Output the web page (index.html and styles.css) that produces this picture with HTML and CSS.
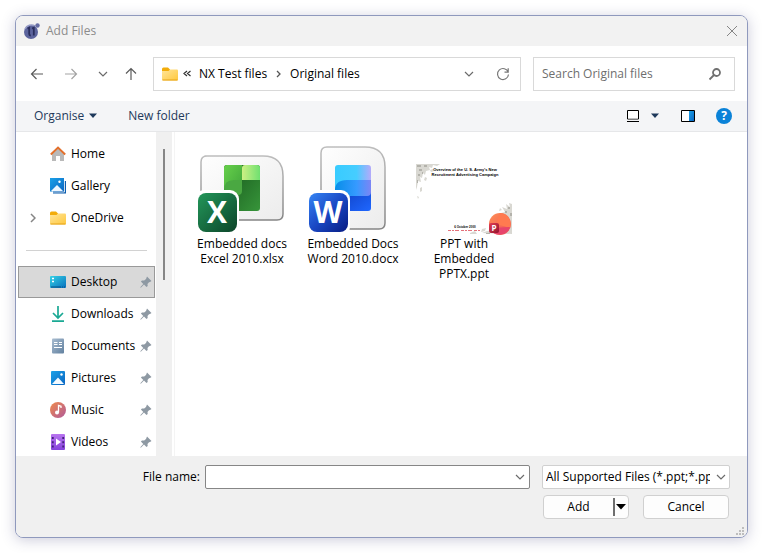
FILE: index.html
```html
<!DOCTYPE html>
<html lang="en">
  <head>
    <meta charset="utf-8">
    <title>Add Files</title>
    <link rel="stylesheet" href="styles.css">
  </head>

  <body>
    <!-- Shapes used more than once -->
    <svg class="defs" width="0" height="0" aria-hidden="true">
      <defs>
        <linearGradient id="folderFill" x1="0" y1="0" x2="1" y2="1">
          <stop offset="0" stop-color="#ffe59a"/><stop offset="1" stop-color="#ffc83d"/>
        </linearGradient>
        <linearGradient id="blueFill" x1="0" y1="0" x2="1" y2="1">
          <stop offset="0" stop-color="#1ba1e8"/><stop offset="1" stop-color="#0a66c2"/>
        </linearGradient>
        <linearGradient id="paperFill" x1="0" y1="0" x2="1" y2="1">
          <stop offset="0" stop-color="#fefefe"/><stop offset="1" stop-color="#ececec"/>
        </linearGradient>
        <linearGradient id="paperEdge" x1="0" y1="0" x2="0" y2="1">
          <stop offset="0" stop-color="#bdbdbd"/><stop offset="1" stop-color="#858585"/>
        </linearGradient>
        <symbol id="folder" viewBox="0 0 16 14">
          <rect y="2.500" width="16" height="11" rx="1" fill="url(#folderFill)"/>
          <path d="M0 2a1.500 1.500 0 0 1 1.500-1.500H6l2 2-1.500 1.500H0z" fill="#f2ac0a"/>
          <path d="M.5 13h15" stroke="#e5a31b"/>
        </symbol>
        <symbol id="pin" viewBox="0 0 12 12">
          <path d="M7 .5 11.500 5 10 6l-1 .2L7.500 8l.2 2L6.500 11 4 8.500.8 11.700.3 11.200 3.300 8 .9 5.500 2 4.500l2.200.1L6 3z" fill="#8e99a3"/>
        </symbol>
        <symbol id="chevron" viewBox="0 0 10 10">
          <path d="M1 3l4 4 4-4" fill="none" stroke="#6b6b6b" stroke-width="1.200"/>
        </symbol>
        <symbol id="caret" viewBox="0 0 10 6">
          <path d="M1 0.500h8L5 5z" fill="currentColor"/>
        </symbol>
      </defs>
    </svg>

    <div class="window">
      <header class="titlebar">
        <svg class="app-icon" viewBox="0 0 16 16">
          <circle cx="7" cy="9" r="7" fill="#5c649d"/>
          <path d="M1 6a7 7 0 0 1 10-3" fill="none" stroke="#949ac4" stroke-width="1.500"/>
          <circle cx="13.500" cy="2.500" r="2.200" fill="#666da4"/>
          <path d="M3.500 5.500l1.700-.8v6.300q0 1.500 1.600 1.500M8 5.500l1.800-.8V12.500" fill="none" stroke="#292e5d" stroke-width="1.800"/>
        </svg>
        <h1 class="title">Add Files</h1>
        <button class="plain close" aria-label="Close">
          <svg viewBox="0 0 12 12"><path d="M1 1l10 10M11 1L1 11" stroke="#858585" fill="none"/></svg>
        </button>
      </header>

      <nav class="navbar">
        <div class="nav-buttons">
          <button class="plain" aria-label="Back">
            <svg viewBox="0 0 14 14"><path d="M13 7H1.500M6.500 2L1.500 7l5 5" stroke="#5b5b5b" stroke-width="1.200" fill="none"/></svg>
          </button>
          <button class="plain" aria-label="Forward">
            <svg viewBox="0 0 14 14"><path d="M1 7h11.500M7.500 2l5 5-5 5" stroke="#a3a3a3" stroke-width="1.200" fill="none"/></svg>
          </button>
          <button class="plain recent" aria-label="Recent locations">
            <svg class="small"><use href="#chevron"/></svg>
          </button>
          <button class="plain" aria-label="Up">
            <svg viewBox="0 0 14 14"><path d="M7 13V1.500M2 6.500l5-5 5 5" stroke="#5b5b5b" stroke-width="1.200" fill="none"/></svg>
          </button>
        </div>
        <div class="address">
          <svg class="icon"><use href="#folder"/></svg>
          <svg class="overflow" viewBox="0 0 8 8"><path d="M4 1L1 3.500 4 6M7.500 1l-3 2.500 3 2.500" stroke="#333" stroke-width="1.200" fill="none"/></svg>
          <a href="#">NX Test files</a>
          <svg class="sep" viewBox="0 0 6 8"><path d="M1 1l3 3-3 3" stroke="#555" stroke-width="1.300" fill="none"/></svg>
          <a href="#">Original files</a>
          <button class="plain history" aria-label="Previous locations">
            <svg class="small"><use href="#chevron"/></svg>
          </button>
          <button class="plain" aria-label="Refresh">
            <svg viewBox="0 0 14 14"><path d="M12.200 5.200A5.500 5.500 0 1 0 12.500 7.500M12.200 1.200v4H8.500" stroke="#777" stroke-width="1.200" fill="none"/></svg>
          </button>
        </div>
        <div class="search">
          <input type="text" placeholder="Search Original files" aria-label="Search Original files">
          <button class="plain" aria-label="Search">
            <svg viewBox="0 0 14 14"><circle cx="8.500" cy="5.500" r="3.500" stroke="#707070" stroke-width="1.800" fill="none"/><path d="M6 8l-4.500 4.500" stroke="#707070" stroke-width="1.800"/></svg>
          </button>
        </div>
      </nav>

      <div class="toolbar">
        <button class="plain">Organise <svg class="caret"><use href="#caret"/></svg></button>
        <button class="plain">New folder</button>
        <div class="toolbar-right">
          <button class="plain" aria-label="Change your view">
            <svg class="view" viewBox="0 0 12 12"><path d="M.5.500h11v8.500H.5zM0 11.500h12" stroke="#000" fill="none"/><path d="M1 1h10v7.500H1z" fill="#fff"/></svg>
          </button>
          <button class="plain more" aria-label="More options">
            <svg class="caret"><use href="#caret"/></svg>
          </button>
          <button class="plain" aria-label="Preview pane">
            <svg class="pane" viewBox="0 0 14 12"><path d="M.5.500h13v11H.5z" stroke="#000" fill="#fff"/><path d="M8 1h5v10H8z" fill="url(#blueFill)"/></svg>
          </button>
          <button class="plain help" aria-label="Help">?</button>
        </div>
      </div>

      <main class="content">
        <aside class="sidebar">
          <ul class="places">
            <li><a href="#">
              <svg class="icon" viewBox="0 0 16 16"><path d="M2 7.500l6-6 6 6V15H10v-5H6v5H2z" fill="#b9b9b9"/><path d="M6 10h4v5H6z" fill="#fff"/><path d="M.8 8.500L8 1.500l7.200 7" stroke="#e3702c" stroke-width="1.900" fill="none"/></svg>
              Home</a></li>
            <li><a href="#">
              <svg class="icon" viewBox="0 0 16 16"><path d="M3 3h13v12.500H3z" fill="#0b5cad"/><path d="M0 0h14v13.500H0z" fill="url(#blueFill)"/><path d="M14.500 2v12H2" stroke="#fff" stroke-width=".8" fill="none"/><path d="M1 13l6-6 6 6z" fill="#eef7ff"/><circle cx="9.500" cy="3.800" r="1.200" fill="#fff"/></svg>
              Gallery</a></li>
            <li><a href="#">
              <svg class="expand" viewBox="0 0 6 10"><path d="M1 1l4 4-4 4" stroke="#858585" stroke-width="1.500" fill="none"/></svg>
              <svg class="icon"><use href="#folder"/></svg>
              OneDrive</a></li>
          </ul>
          <ul class="places pinned">
            <li><a href="#" class="selected">
              <svg class="icon" viewBox="0 0 16 16"><defs><linearGradient id="desk" x2="1" y2="1"><stop stop-color="#35d2e6"/><stop offset="1" stop-color="#0870bd"/></linearGradient></defs><rect y="2" width="16" height="12" rx="1" fill="url(#desk)"/><path d="M2 4.500h2M2 7.500h2" stroke="#fff" stroke-width="1.500"/><path d="M1 13h10M12 13h1M14 13h1" stroke="#084f87"/></svg>
              Desktop<svg class="pin"><use href="#pin"/></svg></a></li>
            <li><a href="#">
              <svg class="icon" viewBox="0 0 16 16"><path d="M8 0v11.500M3 7l5 5 5-5M2 15.200h12" stroke="#1aa994" stroke-width="1.700" fill="none"/></svg>
              Downloads<svg class="pin"><use href="#pin"/></svg></a></li>
            <li><a href="#">
              <svg class="icon" viewBox="0 0 16 16"><defs><linearGradient id="doc" x2="1" y2="1"><stop stop-color="#a9bdd1"/><stop offset="1" stop-color="#61809f"/></linearGradient></defs><rect x="2" y="0.500" width="12" height="15" rx="1" fill="url(#doc)"/><path d="M4 4.500h3.500M4 6.500h3.500M9 4.500h3M9 6.500h3M4 9.500h8" stroke="#fff"/></svg>
              Documents<svg class="pin"><use href="#pin"/></svg></a></li>
            <li><a href="#">
              <svg class="icon" viewBox="0 0 16 16"><rect x="1" y="1" width="14" height="14" rx="1" fill="url(#blueFill)"/><path d="M2 14l6-6.500 6 6.500z" fill="#f4faff"/><circle cx="11.500" cy="4.500" r="1.200" fill="#fff"/></svg>
              Pictures<svg class="pin"><use href="#pin"/></svg></a></li>
            <li><a href="#">
              <svg class="icon" viewBox="0 0 16 16"><defs><linearGradient id="mus" x2="1" y2="1"><stop stop-color="#f08a4b"/><stop offset="1" stop-color="#b05a9a"/></linearGradient></defs><circle cx="8" cy="8" r="8" fill="url(#mus)"/><circle cx="7" cy="10.500" r="2" fill="#fff"/><path d="M8.500 10.500V3.500l2.500.8V6" stroke="#fff" stroke-width="1.300" fill="none"/></svg>
              Music<svg class="pin"><use href="#pin"/></svg></a></li>
            <li><a href="#">
              <svg class="icon" viewBox="0 0 16 16"><defs><linearGradient id="vid" x2="0" y2="1"><stop stop-color="#b874ef"/><stop offset="1" stop-color="#8543dc"/></linearGradient></defs><rect x="1" width="14" height="16" rx="1" fill="url(#vid)"/><path d="M2.800 3v11M13.200 3v11" stroke="#43217b" stroke-width="1.800" stroke-dasharray="2 2.300"/><path d="M6 4.500l5 3.500-5 3.500z" fill="#fff"/></svg>
              Videos<svg class="pin"><use href="#pin"/></svg></a></li>
          </ul>
        </aside>
        <div class="scrollbar"><div class="thumb"></div></div>

        <ul class="files">
          <li class="file">
            <svg class="preview" viewBox="0 0 96 96">
              <defs>
                <linearGradient id="xa" x2="1" y2="1"><stop stop-color="#67d04b"/><stop offset="1" stop-color="#3fa43a"/></linearGradient>
                <linearGradient id="xb" x2="1"><stop stop-color="#cdf084"/><stop offset="1" stop-color="#6fe070"/></linearGradient>
                <linearGradient id="xc" x2="1" y2="1"><stop stop-color="#16551b"/><stop offset="1" stop-color="#37953a"/></linearGradient>
                <linearGradient id="xd" x2="1" y2="1"><stop stop-color="#23975a"/><stop offset="1" stop-color="#0c4429"/></linearGradient>
              </defs>
              <path d="M10.500 16H69q20 0 20 20v38q0 6-6 6H13q-6 0-6-6V22q0-6 6-6z" fill="url(#paperFill)" stroke="url(#paperEdge)" stroke-width="1.500"/>
              <rect x="30" y="25" width="36" height="46" rx="3" fill="url(#xc)"/>
              <path d="M33 25h15v15q-18 0-18 13V28q0-3 3-3z" fill="url(#xa)"/>
              <path d="M51 25h12q3 0 3 3v12H48V28q0-3 3-3z" fill="url(#xb)"/>
              <path d="M30 50q0-10 10-10h8v11q0 4-4 4H30z" fill="#4aa842"/>
              <rect x="1" y="50" width="44" height="46" rx="9" fill="#fff"/>
              <rect x="4" y="53" width="39" height="39" rx="8" fill="url(#xd)"/>
              <text x="23" y="83" class="badge">X</text>
            </svg>
            <span>Embedded docs Excel 2010.xlsx</span>
          </li>
          <li class="file">
            <svg class="preview" viewBox="0 0 96 96">
              <defs>
                <linearGradient id="wa" x2="1"><stop stop-color="#38ccff"/><stop offset=".6" stop-color="#46cdff"/><stop offset="1" stop-color="#b4aafa"/></linearGradient>
                <linearGradient id="wb" x2="1"><stop stop-color="#068ee8"/><stop offset=".6" stop-color="#369aff"/><stop offset="1" stop-color="#7c85f5"/></linearGradient>
                <linearGradient id="wc" x2="1" y2="1"><stop stop-color="#0b37b5"/><stop offset="1" stop-color="#1f67ff"/></linearGradient>
                <linearGradient id="wd" x2="1" y2="1"><stop stop-color="#3585f4"/><stop offset=".5" stop-color="#1a48c4"/><stop offset="1" stop-color="#071b82"/></linearGradient>
              </defs>
              <path d="M22 7h38q20 0 20 20v56q0 6-6 6H22q-6 0-6-6V13q0-6 6-6z" fill="url(#paperFill)" stroke="url(#paperEdge)" stroke-width="1.500"/>
              <rect x="30" y="45" width="36" height="26" rx="3" fill="url(#wc)"/>
              <path d="M33 40h33v12q0 4-4 4H30V43q0-3 3-3z" fill="url(#wb)"/>
              <path d="M33 25h30q3 0 3 3v12H42q-12 0-12 10V28q0-3 3-3z" fill="url(#wa)"/>
              <rect x="1" y="50" width="44" height="46" rx="9" fill="#fff"/>
              <rect x="4" y="53" width="39" height="39" rx="8" fill="url(#wd)"/>
              <text x="23" y="83" class="badge">W</text>
            </svg>
            <span>Embedded Docs Word 2010.docx</span>
          </li>
          <li class="file">
            <svg class="preview" viewBox="0 0 96 96">
              <defs>
                <linearGradient id="pa" x2="1" y2="1"><stop stop-color="#ff9155"/><stop offset="1" stop-color="#ec4b58"/></linearGradient>
                <linearGradient id="pb" x2="1" y2="1"><stop stop-color="#e53e53"/><stop offset="1" stop-color="#8f142d"/></linearGradient>
              </defs>
              <!-- mottled corners of the slide -->
              <g fill="#d9d8d2">
                <path d="M0 24h24l-3 2-4-1-1 3-3-1 1 3-4 1-1 4-2-2-1 5-2-1 1 5-3-1-1 6-1 3z"/>
                <path d="M14 30l3-1 1 2-3 1zM9 37l2 1-1 3-2-1zM4 48l2-1v4l-2 1zM1 56l2 1-1 2z"/>
                <path d="M96 64l-3-1 1 4-4-3 1 5-5-2 3 5-4 1 4 3-2 3-4 1-4 10-8 1-5 2 30 1z"/>
                <path d="M84 68l2 2-3 1zM80 76l3-1-1 4zM66 89l4-1-1 3-4 1zM54 93l5-2 2 3h-7z"/>
              </g>
              <g fill="#b3b2ab">
                <path d="M1 25h4v2H1zM8 25h3v2H8zM3 29h3v2H3zM2 34h2v2H2zM6 32h1v2H6zM1 40h1v3H1z"/>
                <path d="M92 67h2v2h-2zM89 71h2v2h-2zM94 73h2v3h-2zM86 92h3v2h-3zM70 93h4v1h-4z"/>
              </g>
              <text x="49" y="31" class="slide-title">Overview of the U. S. Army's New</text>
              <text x="49" y="36" class="slide-title">Recruitment Advertising Campaign</text>
              <text x="49" y="88" class="slide-date">6 October 2000</text>
              <path d="M32 90.500h33" stroke="#e4717b" stroke-dasharray="3 1 2 1 4 2"/>
              <circle cx="84" cy="84" r="11" fill="url(#pa)"/>
              <path d="M84 73a11 11 0 0 1 10 15L80 84z" fill="#ff7a50"/>
              <path d="M74 88l20-1a11 11 0 0 1-20 2z" fill="#e7446c"/>
              <rect x="73" y="83" width="10" height="10" rx="2" fill="url(#pb)"/>
              <text x="78" y="91" class="badge-small">P</text>
            </svg>
            <span>PPT with Embedded PPTX.ppt</span>
          </li>
        </ul>
      </main>

      <footer class="footer">
        <div class="row">
          <label for="filename">File name:</label>
          <div class="combo">
            <input type="text" id="filename">
            <button class="plain" aria-label="Recent names"><svg class="small"><use href="#chevron"/></svg></button>
          </div>
          <div class="filter">
            <select aria-label="File type">
              <option>All Supported Files (*.ppt;*.pptx;*.doc;*.docx)</option>
            </select>
            <svg class="small"><use href="#chevron"/></svg>
          </div>
        </div>
        <div class="row actions">
          <div class="split">
            <button class="plain add">Add</button>
            <button class="plain drop" aria-label="More add options"><svg viewBox="0 0 10 6"><path d="M0 0h10L5 5.500z"/></svg></button>
          </div>
          <button class="cancel">Cancel</button>
        </div>
        <svg class="grip" viewBox="0 0 8 8"><path d="M6 0h2v2H6zM3 3h2v2H3zM6 3h2v2H6zM0 6h2v2H0zM3 6h2v2H3zM6 6h2v2H6z" fill="#bdbdbd"/></svg>
      </footer>
    </div>
  </body>
</html>
```

FILE: styles.css
```css
* {
  box-sizing: border-box;
}
body {
  margin: 0;
  padding: 15px;
  background-color: #fff;
  color: #000;
  font: 12px/16px "Open Sans", "Noto Sans", sans-serif;
}
ul {
  list-style: none;
  margin: 0;
  padding: 0;
}
a {
  color: inherit;
  text-decoration: none;
}
svg {
  display: block;
  flex: none;
}
input,
select,
button {
  font: inherit;
  color: inherit;
}
.defs {
  position: absolute;
}
.plain {
  display: flex;
  align-items: center;
  justify-content: center;
  padding: 0;
  border: none;
  background: none;
}
.plain svg {
  width: 14px;
  height: 14px;
}
.plain .small,
.small {
  width: 10px;
  height: 10px;
}
.icon {
  width: 16px;
  height: 16px;
}

.window {
  display: flex;
  flex-direction: column;
  height: calc(100vh - 30px);
  border: 1px solid #8f99bd;
  border-radius: 8px;
  background-color: #fff;
  box-shadow: 0 2px 14px rgba(50, 50, 110, 0.25);
  overflow: hidden;
}

.titlebar {
  display: flex;
  align-items: center;
  height: 30px;
  padding: 0 9px 0 8px;
  background-color: #f2f2f2;
}
.app-icon {
  width: 16px;
  height: 16px;
}
.title {
  margin: 0 auto 0 6px;
  font-size: 12px;
  font-weight: 400;
  color: #8c8c8c;
}
.close svg {
  width: 12px;
  height: 12px;
}

.navbar {
  display: flex;
  align-items: center;
  gap: 12px;
  height: 55px;
  padding: 0 12px 0 14px;
}
.nav-buttons {
  display: flex;
  gap: 20px;
}
.nav-buttons .recent {
  margin-right: -4px;
}
.nav-buttons .plain:last-child {
  margin-right: 3px;
}
.address,
.search {
  display: flex;
  align-items: center;
  height: 34px;
  border: 1px solid #d9d9d9;
}
.address {
  flex: 1;
  padding: 0 10px 0 8px;
}
.overflow {
  width: 8px;
  height: 8px;
  margin: 0 8px 0 5px;
}
.sep {
  width: 6px;
  height: 8px;
  margin: 0 8px 0 9px;
}
.history {
  margin: 0 22px 0 auto;
}
.search {
  width: 202px;
  padding: 0 12px 0 8px;
}
.search input {
  flex: 1;
  min-width: 0;
  padding: 0;
  border: none;
  outline: none;
}
.search input::placeholder {
  color: #6e6e6e;
}

.toolbar {
  display: flex;
  align-items: center;
  gap: 30px;
  height: 31px;
  padding: 0 15px 0 18px;
  background-color: #f4f5f7;
  border-bottom: 1px solid #e6e7e9;
  color: #1e395b;
}
.toolbar .caret {
  width: 10px;
  height: 6px;
  margin-left: 4px;
}
.toolbar-right {
  display: flex;
  align-items: center;
  gap: 21px;
  margin-left: auto;
}
.toolbar .view {
  width: 12px;
  height: 12px;
}
.toolbar .pane {
  width: 14px;
  height: 12px;
}
.more {
  margin-left: -14px;
}
.help {
  width: 16px;
  height: 16px;
  border-radius: 50%;
  background-color: #0a82d8;
  color: #fff;
  font-weight: 700;
}

.content {
  display: flex;
  flex: 1;
  min-height: 0;
}
.sidebar {
  width: 140px;
  padding: 6px 1px 0 2px;
  overflow: hidden;
}
.places a {
  display: flex;
  align-items: center;
  gap: 5px;
  height: 32px;
  padding: 0 2px 0 31px;
  border: 1px solid transparent;
}
.places .selected {
  background-color: #d9d9d9;
  border-color: #999;
}
.places .expand {
  width: 6px;
  height: 10px;
  margin: 0 9px 0 -20px;
}
.pin {
  width: 12px;
  height: 12px;
  margin-left: auto;
}
.pinned::before {
  content: "";
  display: block;
  height: 1px;
  margin: 16px 8px 15px;
  background-color: #d2d2d2;
}
.scrollbar {
  width: 16px;
  padding-top: 17px;
  background-color: #f0f0f0;
}
.thumb {
  width: 2px;
  height: 131px;
  margin-left: 7px;
  background-color: #868686;
}
.files {
  display: flex;
  align-items: flex-start;
  gap: 15px;
  flex: 1;
  margin-left: 2px;
  padding: 8px 19px;
  border-left: 1px solid #f4f4f4;
}
.file {
  width: 96px;
  line-height: 15px;
  text-align: center;
}
.preview {
  width: 96px;
  height: 96px;
}
.badge {
  fill: #fff;
  font-size: 30px;
  font-weight: 700;
  text-anchor: middle;
}
.badge-small {
  fill: #fff;
  font-size: 8px;
  font-weight: 700;
  text-anchor: middle;
}
.slide-title {
  font: bold 4px "Liberation Sans", sans-serif;
  text-anchor: middle;
}
.slide-date {
  font: bold 3px "Liberation Sans", sans-serif;
  text-anchor: middle;
}

.footer {
  position: relative;
  height: 81px;
  padding: 9px 17px 0;
  background-color: #f0f0f0;
}
.row {
  display: flex;
  align-items: center;
  justify-content: flex-end;
}
.combo {
  display: flex;
  align-items: center;
  width: 325px;
  height: 24px;
  margin: 0 12px 0 5px;
  padding-right: 4px;
  border: 1px solid #868686;
  border-radius: 2px;
  background-color: #fff;
}
.combo input {
  flex: 1;
  min-width: 0;
  padding: 0 4px;
  border: none;
  outline: none;
  background: none;
}
.filter {
  position: relative;
  width: 188px;
}
.filter select {
  display: block;
  width: 100%;
  height: 24px;
  padding: 0 19px 0 3px;
  appearance: none;
  border: 1px solid #d0d0d0;
  border-radius: 2px;
  background-color: #fff;
}
.filter svg {
  position: absolute;
  top: 7px;
  right: 4px;
  pointer-events: none;
}
.actions {
  gap: 14px;
  margin-top: 6px;
  padding-right: 1px;
}
.split,
.cancel {
  width: 86px;
  height: 24px;
  border: 1px solid #d0d0d0;
  border-radius: 4px;
  background-color: #fdfdfd;
}
.split {
  display: flex;
  align-items: center;
}
.add {
  flex: 1;
}
.drop {
  height: 18px;
  padding: 0 2px 0 1px;
  border-left: 2px solid #6e6e6e;
}
.drop svg {
  width: 10px;
  height: 6px;
}
.cancel {
  padding: 0;
}
.grip {
  position: absolute;
  right: 3px;
  bottom: 2px;
  width: 8px;
  height: 8px;
}
```
